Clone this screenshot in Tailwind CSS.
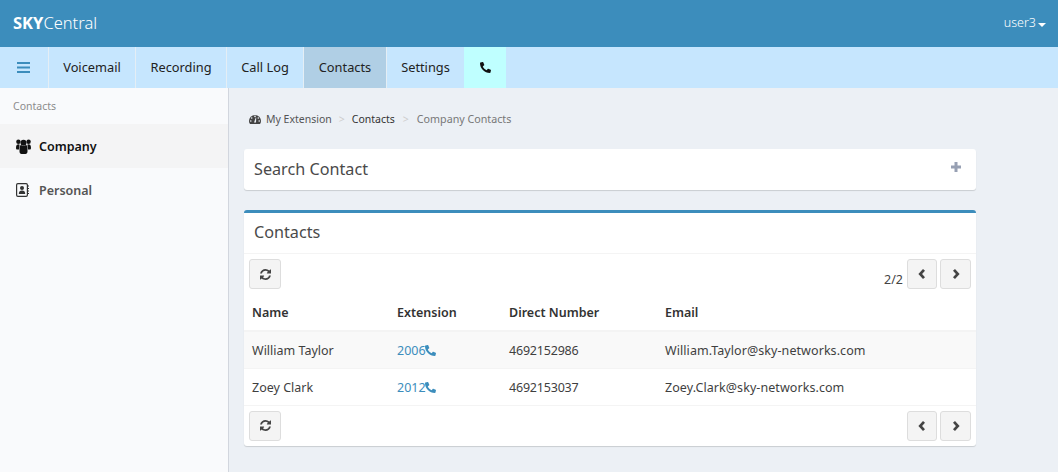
<!DOCTYPE html>
<html lang="en">
<head>
  <meta charset="UTF-8" />
  <title>SKYCentral | Contacts</title>
  <script src="https://cdn.jsdelivr.net/npm/@tailwindcss/browser@4"></script>
</head>
<body class="font-['Noto_Sans',sans-serif] text-[13px] text-[#333] bg-[#ecf0f5] h-[472px] overflow-hidden">
  <!-- top bar -->
  <header class="h-[47px] bg-[#3c8dbc] text-white flex items-center justify-between pl-[13px] pr-[12px]">
    <a class="text-[16.5px]"><b class="font-bold">SKY</b><span class="font-light">Central</span></a>
    <a class="flex items-center gap-[2px] text-[12.5px] font-light">user3<span class="border-x-[4px] border-x-transparent border-t-[4px] border-t-white mt-[2px]"></span></a>
  </header>

  <!-- module tabs -->
  <nav class="h-[41px] bg-[#c6e6fe] flex text-[#222] text-[12.8px]">
    <a class="w-[49px] border-r border-[#e4eef5] flex items-center justify-center pr-[1px]">
      <svg class="w-[13px] h-[11px] text-[#3c8dbc]" viewBox="0 0 13 11" fill="currentColor"><rect width="13" height="2"/><rect y="4.500" width="13" height="2"/><rect y="9" width="13" height="2"/></svg>
    </a>
    <a class="w-[87px] border-r border-[#e4eef5] flex items-center justify-center">Voicemail</a>
    <a class="w-[91px] border-r border-[#e4eef5] flex items-center justify-center">Recording</a>
    <a class="w-[77px] border-r border-[#e4eef5] flex items-center justify-center">Call Log</a>
    <a class="w-[83px] border-r border-[#e4eef5] flex items-center justify-center bg-[#b0cfe5]">Contacts</a>
    <a class="w-[77px] flex items-center justify-center">Settings</a>
    <a class="w-[42px] flex items-center justify-center bg-[#bfffff]">
      <svg class="w-[11px] h-[11px] -scale-x-100 text-[#111] mb-[1px]" viewBox="0 0 512 512" fill="currentColor"><path d="M493.400 24.600l-104-24c-11.300-2.600-22.900 3.300-27.500 13.900l-48 112c-4.200 9.800-1.400 21.300 6.900 28l60.600 49.600c-36 76.700-98.900 140.500-177.200 177.200l-49.600-60.600c-6.800-8.300-18.200-11.100-28-6.900l-112 48C3.900 366.500-2 378.100.6 389.400l24 104C27.100 504.200 36.700 512 48 512c256.100 0 464-207.500 464-464 0-11.200-7.700-20.900-18.600-23.400z"/></svg>
    </a>
  </nav>

  <div class="flex h-[384px]">
    <!-- sidebar -->
    <aside class="w-[229px] shrink-0 bg-[#f9fafc] border-r border-[#d2d6de]">
      <div class="h-[36px] pl-[13px] pt-[9px] text-[10.500px] text-[#8c8c8c] leading-[18px]">Contacts</div>
      <a class="h-[44px] bg-[#f4f4f5] flex items-center pl-[16px] gap-[8px] pt-[2px] font-semibold text-[#111] text-[12.500px]">
        <svg class="w-[15px] h-[15px] mb-[2px]" viewBox="0 0 15 15" fill="currentColor"><circle cx="7.500" cy="3.800" r="3"/><circle cx="2.400" cy="2.800" r="2.200"/><circle cx="12.600" cy="2.800" r="2.200"/><path d="M0 9C0 6.300 1 5.300 2.500 5.300c.5 0 .9.200 1.200.5C3.300 6.800 3 8.500 3 10.500H1C.4 10.500 0 9.800 0 9zM15 9c0-2.700-1-3.700-2.500-3.700-.5 0-.9.200-1.200.5.400 1 .7 2.700.7 4.700h2c.6 0 1-.7 1-1.500z"/><path d="M3.500 8.500C3.500 7 4.200 6 5.200 6c.6.500 1.400.9 2.300.9S9.200 6.500 9.800 6c1 0 1.700 1 1.700 2.500v4c0 1.500-.8 2.500-2 2.500h-4c-1.200 0-2-1-2-2.500z"/></svg>
        Company
      </a>
      <a class="h-[44px] flex items-center pl-[16px] gap-[10px] pt-[2px] font-semibold text-[#555] text-[12.500px]">
        <svg class="w-[13px] h-[14px] mb-[2px]" viewBox="0 0 13 14"><rect x=".6" y=".6" width="10.800" height="12.800" rx="1.300" fill="none" stroke="#333" stroke-width="1.200"/><circle cx="6" cy="5" r="2" fill="#333"/><path d="M2.800 11c0-2.400 1.100-3.500 3.200-3.500s3.200 1.100 3.200 3.500z" fill="#333"/><path d="M11.500 3H13M11.500 5.500H13M11.500 8H13M11.500 10.500H13" stroke="#333"/></svg>
        Personal
      </a>
    </aside>

    <!-- content -->
    <main class="flex-1 pl-[15px] pr-[82px]">
      <div class="h-[61px] flex items-start pt-[22px] pl-[5px] text-[10.500px] leading-[18px] text-[#555]">
        <span class="flex items-center gap-[5px]">
          <svg class="w-[12px] h-[10px]" viewBox="0 0 12 10" fill="#444"><path d="M0 7a6 6 0 0 1 12 0c0 1.200-.4 2.200-1 3H1C.4 9.200 0 8.200 0 7z"/><circle cx="6" cy="2.400" r=".8" fill="#ecf0f5"/><circle cx="2.700" cy="4" r=".8" fill="#ecf0f5"/><circle cx="9.300" cy="4" r=".8" fill="#ecf0f5"/><circle cx="1.800" cy="7" r=".8" fill="#ecf0f5"/><circle cx="10.200" cy="7" r=".8" fill="#ecf0f5"/><path d="M5 8.500 6.800 3.500 7.200 3.600 7 8.500z" fill="#ecf0f5"/></svg>
          My Extension
        </span>
        <span class="text-[#ccc] ml-[7px] mr-[7px]">&gt;</span>
        <span class="text-[#333]">Contacts</span>
        <span class="text-[#ccc] ml-[8px] mr-[8px]">&gt;</span>
        <span class="text-[#777] text-[10.700px]">Company Contacts</span>
      </div>

      <section class="h-[41px] bg-white rounded-[3px] shadow-[0_1px_1px_rgba(0,0,0,0.15)] flex items-center justify-between pl-[10px] pr-[15px]">
        <h3 class="text-[16.200px] text-[#4a4a4a]">Search Contact</h3>
        <svg class="w-[10px] h-[10px] mb-[5px] text-[#97a0b3]" viewBox="0 0 10 10" fill="currentColor"><rect x="3.500" width="3" height="10"/><rect y="3.500" width="10" height="3"/></svg>
      </section>

      <section class="mt-[20px] bg-white rounded-[3px] border-t-[3px] border-[#3c8dbc] shadow-[0_1px_1px_rgba(0,0,0,0.15)]">
        <h3 class="h-[41px] pl-[10px] pb-[2px] flex items-center text-[16.200px] text-[#4a4a4a] border-b border-[#f4f4f4]">Contacts</h3>
        <div class="h-[42px] flex justify-between items-start pt-[5px] px-[5px]">
          <button class="w-[32px] h-[30px] bg-[#f4f4f4] border border-[#ddd] rounded-[3px] flex items-center justify-center">
            <svg class="w-[11px] h-[11px] text-[#444]" viewBox="0 0 1536 1536" fill="currentColor"><path d="M1511 928q0 5-1 7-64 268-268 434.500t-478 166.500q-146 0-282.500-55t-243.500-157l-129 129q-19 19-45 19t-45-19-19-45v-448q0-26 19-45t45-19h448q26 0 45 19t19 45-19 45l-137 137q71 66 161 102t187 36q134 0 250-65t186-179q11-17 53-117 8-23 30-23h192q13 0 22.500 9.500t9.500 22.500zm25-800v448q0 26-19 45t-45 19h-448q-26 0-45-19t-19-45 19-45l138-138q-148-137-349-137-134 0-250 65t-186 179q-11 17-53 117-8 23-30 23h-199q-13 0-22.500-9.500t-9.500-22.500v-7q65-268 270-434.500t480-166.500q146 0 284 55.500t245 156.500l130-129q19-19 45-19t45 19 19 45z"/></svg>
          </button>
          <div class="flex items-start gap-[3px]">
            <span class="mt-[12px] mr-[1px] text-[12.500px] leading-[18px] text-[#444]">2/2</span>
            <button class="w-[30px] h-[30px] bg-[#f4f4f4] border border-[#ddd] rounded-[3px] flex items-center justify-center pb-[1px]">
              <svg class="w-[8px] h-[12px] text-[#444]" viewBox="0 0 8 12" fill="none" stroke="currentColor" stroke-width="2.700"><path d="M6 1.800 2.200 6 6 10.200"/></svg>
            </button>
            <button class="w-[31px] h-[30px] bg-[#f4f4f4] border border-[#ddd] rounded-[3px] flex items-center justify-center pb-[1px]">
              <svg class="w-[8px] h-[12px] text-[#444]" viewBox="0 0 8 12" fill="none" stroke="currentColor" stroke-width="2.700"><path d="M2 1.800 5.800 6 2 10.200"/></svg>
            </button>
          </div>
        </div>

        <table class="w-full table-fixed border-collapse text-[12.500px] text-[#3f3f3f]">
          <thead>
            <tr class="h-[35px] border-b-2 border-[#f4f4f4] text-left">
              <th class="w-[145px] pl-[8px] pt-[1px] font-semibold text-[#333]">Name</th>
              <th class="w-[112px] pl-[8px] pt-[1px] font-semibold text-[#333]">Extension</th>
              <th class="w-[156px] pl-[8px] pt-[1px] font-semibold text-[#333]">Direct Number</th>
              <th class="pl-[8px] pt-[1px] font-semibold text-[#333]">Email</th>
            </tr>
          </thead>
          <tbody>
            <tr class="h-[37px] bg-[#f9f9f9] border-b border-[#f4f4f4]">
              <td class="pl-[8px] pt-[4px]">William Taylor</td>
              <td class="pl-[8px] pt-[4px] text-[#3c8dbc]"><span class="inline-flex items-center">2006<svg class="w-[11px] h-[11px] -scale-x-100 mb-[3px] -ml-[1px]" viewBox="0 0 512 512" fill="currentColor"><path d="M493.400 24.600l-104-24c-11.300-2.600-22.900 3.300-27.500 13.900l-48 112c-4.200 9.800-1.400 21.300 6.900 28l60.600 49.600c-36 76.700-98.900 140.500-177.200 177.200l-49.600-60.600c-6.800-8.300-18.200-11.100-28-6.900l-112 48C3.900 366.500-2 378.100.6 389.400l24 104C27.100 504.200 36.700 512 48 512c256.100 0 464-207.500 464-464 0-11.200-7.700-20.900-18.600-23.400z"/></svg></span></td>
              <td class="pl-[8px] pt-[4px] tracking-[-0.2px]">4692152986</td>
              <td class="pl-[8px] pt-[4px] tracking-[0.07px]">William.Taylor@sky-networks.com</td>
            </tr>
            <tr class="h-[37px] border-b border-[#f4f4f4]">
              <td class="pl-[8px] pt-[4px]">Zoey Clark</td>
              <td class="pl-[8px] pt-[4px] text-[#3c8dbc]"><span class="inline-flex items-center">2012<svg class="w-[11px] h-[11px] -scale-x-100 mb-[3px] -ml-[1px]" viewBox="0 0 512 512" fill="currentColor"><path d="M493.400 24.600l-104-24c-11.300-2.600-22.900 3.300-27.500 13.900l-48 112c-4.200 9.800-1.400 21.300 6.900 28l60.600 49.600c-36 76.700-98.900 140.500-177.200 177.200l-49.600-60.600c-6.800-8.300-18.200-11.100-28-6.900l-112 48C3.900 366.500-2 378.100.6 389.400l24 104C27.100 504.200 36.700 512 48 512c256.100 0 464-207.500 464-464 0-11.200-7.700-20.900-18.600-23.400z"/></svg></span></td>
              <td class="pl-[8px] pt-[4px] tracking-[-0.2px]">4692153037</td>
              <td class="pl-[8px] pt-[4px] tracking-[0.07px]">Zoey.Clark@sky-networks.com</td>
            </tr>
          </tbody>
        </table>

        <div class="h-[40px] flex justify-between items-start pt-[5px] px-[5px]">
          <button class="w-[32px] h-[30px] bg-[#f4f4f4] border border-[#ddd] rounded-[3px] flex items-center justify-center">
            <svg class="w-[11px] h-[11px] text-[#444]" viewBox="0 0 1536 1536" fill="currentColor"><path d="M1511 928q0 5-1 7-64 268-268 434.500t-478 166.500q-146 0-282.500-55t-243.500-157l-129 129q-19 19-45 19t-45-19-19-45v-448q0-26 19-45t45-19h448q26 0 45 19t19 45-19 45l-137 137q71 66 161 102t187 36q134 0 250-65t186-179q11-17 53-117 8-23 30-23h192q13 0 22.500 9.500t9.500 22.500zm25-800v448q0 26-19 45t-45 19h-448q-26 0-45-19t-19-45 19-45l138-138q-148-137-349-137-134 0-250 65t-186 179q-11 17-53 117-8 23-30 23h-199q-13 0-22.500-9.500t-9.500-22.500v-7q65-268 270-434.500t480-166.500q146 0 284 55.500t245 156.500l130-129q19-19 45-19t45 19 19 45z"/></svg>
          </button>
          <div class="flex gap-[3px]">
            <button class="w-[30px] h-[30px] bg-[#f4f4f4] border border-[#ddd] rounded-[3px] flex items-center justify-center">
              <svg class="w-[8px] h-[12px] text-[#444]" viewBox="0 0 8 12" fill="none" stroke="currentColor" stroke-width="2.700"><path d="M6 1.800 2.200 6 6 10.200"/></svg>
            </button>
            <button class="w-[31px] h-[30px] bg-[#f4f4f4] border border-[#ddd] rounded-[3px] flex items-center justify-center">
              <svg class="w-[8px] h-[12px] text-[#444]" viewBox="0 0 8 12" fill="none" stroke="currentColor" stroke-width="2.700"><path d="M2 1.800 5.800 6 2 10.200"/></svg>
            </button>
          </div>
        </div>
      </section>
    </main>
  </div>
</body>
</html>
